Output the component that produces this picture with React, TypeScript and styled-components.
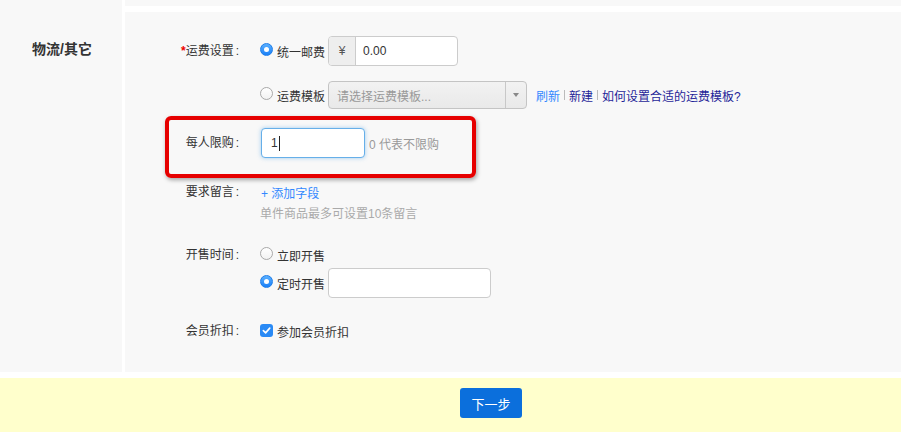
import React from "react";
import styled, { createGlobalStyle, css } from "styled-components";

const Global = createGlobalStyle`
  html, body { margin: 0; padding: 0; background: #fff; }
  body {
    font-family: "Liberation Sans", "Noto Sans CJK SC", sans-serif;
    font-size: 12px;
    color: #333;
  }
`;

const Section = styled.div<{ $h?: number }>`
  display: flex;
  gap: 3px;
  margin-bottom: 6px;
  ${(p) => p.$h !== undefined && css`height: ${p.$h}px;`}
`;

const SideCol = styled.div`
  width: 122px;
  flex: none;
  background: #f8f8f8;
  box-sizing: border-box;
  padding: 27px 0 0 32px;
  font-size: 14px;
  font-weight: bold;
  line-height: 20px;
  color: #333;
`;

const MainCol = styled.div<{ $bare?: boolean }>`
  flex: 1;
  background: #f8f8f8;
  position: relative;
  padding: ${(p) => (p.$bare ? "0" : "24px 0 31px")};
`;

const Row = styled.div<{ $mt?: number }>`
  display: flex;
  margin-top: ${(p) => p.$mt ?? 0}px;
`;

const Label = styled.div<{ $lh?: number }>`
  width: 115px;
  flex: none;
  text-align: right;
  line-height: ${(p) => p.$lh ?? 20}px;
  color: #333;
  white-space: nowrap;
`;

const Colon = styled.span`
  margin-left: 2px;
  margin-right: 1px;
`;

const Star = styled.span`
  color: #e00;
  font-weight: bold;
`;

const Controls = styled.div`
  margin-left: 20px;
  display: flex;
  flex-direction: column;
`;

const Line = styled.div<{ $h?: number; $mt?: number }>`
  display: flex;
  align-items: center;
  height: ${(p) => p.$h ?? 20}px;
  margin-top: ${(p) => p.$mt ?? 0}px;
  white-space: nowrap;
`;

const RadioDot = styled.span<{ $on?: boolean }>`
  width: 13px;
  height: 13px;
  border-radius: 50%;
  box-sizing: border-box;
  flex: none;
  margin-bottom: 3px;
  display: inline-flex;
  align-items: center;
  justify-content: center;
  ${(p) =>
    p.$on
      ? css`
          background: linear-gradient(#5bb0ff, #1a80f8);
          border: 1px solid #1f7ee8;
          &::after {
            content: "";
            width: 5px;
            height: 5px;
            border-radius: 50%;
            background: #fff;
          }
        `
      : css`
          background: linear-gradient(#fff, #f2f2f2);
          border: 1px solid #a9a9a9;
        `}
`;

const OptText = styled.span`
  margin-left: 4px;
  color: #333;
`;

const InputGroup = styled.div`
  margin-left: 3px;
  width: 130px;
  height: 30px;
  box-sizing: border-box;
  border: 1px solid #ccc;
  border-radius: 4px;
  background: #fff;
  display: flex;
  overflow: hidden;
`;

const Addon = styled.div`
  width: 26px;
  background: #eee;
  border-right: 1px solid #ccc;
  display: flex;
  align-items: center;
  justify-content: center;
  color: #555;
`;

const GroupValue = styled.div`
  padding-left: 7px;
  display: flex;
  align-items: center;
  color: #333;
`;

const Select = styled.div`
  margin-left: 3px;
  width: 199px;
  height: 28px;
  box-sizing: border-box;
  border: 1px solid #c4c4c4;
  border-radius: 4px;
  background: linear-gradient(#f2f2f2, #e9e9e9);
  display: flex;
`;

const SelectText = styled.div`
  flex: 1;
  padding-left: 8px;
  display: flex;
  align-items: center;
  color: #999;
`;

const SelectArrow = styled.div`
  width: 20px;
  border-left: 1px solid #c8c8c8;
  display: flex;
  align-items: center;
  justify-content: center;
  &::after {
    content: "";
    border-left: 3px solid transparent;
    border-right: 3px solid transparent;
    border-top: 4px solid #888;
  }
`;

const Links = styled.div`
  margin-left: 9px;
  display: flex;
  align-items: center;
`;

const Link = styled.a<{ $visited?: boolean }>`
  color: ${(p) => (p.$visited ? "#1f1f98" : "#3388ff")};
  text-decoration: none;
  cursor: pointer;
`;

const Sep = styled.span`
  width: 1px;
  height: 10px;
  background: #bbb;
  margin: 0 4px;
`;

const TextBox = styled.div<{ $w: number; $focus?: boolean; $ml?: number }>`
  width: ${(p) => p.$w}px;
  height: 30px;
  box-sizing: border-box;
  margin-left: ${(p) => p.$ml ?? 0}px;
  background: #fff;
  border-radius: 4px;
  display: flex;
  align-items: center;
  padding-left: 9px;
  color: #333;
  ${(p) =>
    p.$focus
      ? css`
          border: 1px solid #66afe9;
          box-shadow: 0 0 4px rgba(102, 175, 233, 0.6);
        `
      : css`
          border: 1px solid #ccc;
        `}
`;

const Caret = styled.span`
  display: inline-block;
  width: 1px;
  height: 15px;
  background: #222;
  margin-left: 1px;
`;

const Hint = styled.span`
  margin-left: 4px;
  color: #999;
`;

const HelpText = styled.div`
  margin-top: 2px;
  line-height: 20px;
  color: #aaa;
`;

const CheckBox = styled.span`
  width: 13px;
  height: 13px;
  border-radius: 3px;
  background: #2a8af5;
  display: inline-flex;
  align-items: center;
  justify-content: center;
  margin-bottom: 2px;
  flex: none;
`;

const Highlight = styled.div`
  position: absolute;
  left: 40px;
  top: 104px;
  width: 311px;
  height: 62px;
  box-sizing: border-box;
  border: 4px solid #e60000;
  border-radius: 6px;
  box-shadow: 1px 2px 4px rgba(0, 0, 0, 0.35);
  pointer-events: none;
`;

const Footer = styled.div`
  background: #ffffcc;
  height: 60px;
  box-sizing: border-box;
  padding: 10px 0 0 460px;
`;

const Button = styled.button`
  width: 62px;
  height: 30px;
  border: none;
  border-radius: 3px;
  background: #0b6fdc;
  color: #fff;
  font-family: "Liberation Sans", "Noto Sans CJK SC", sans-serif;
  font-size: 13px;
  padding: 0;
  cursor: pointer;
`;

const Radio = ({ on, children }: { on?: boolean; children: React.ReactNode }) => (
  <>
    <RadioDot $on={on} />
    <OptText>{children}</OptText>
  </>
);

export default function App() {
  return (
    <>
      <Global />
      <Section $h={6}>
        <SideCol />
        <MainCol $bare />
      </Section>
      <Section>
        <SideCol>物流/其它</SideCol>
        <MainCol>
          <Row>
            <Label $lh={30}>
              <Star>*</Star>运费设置<Colon>:</Colon>
            </Label>
            <Controls>
              <Line $h={30}>
                <Radio on>统一邮费</Radio>
                <InputGroup>
                  <Addon>¥</Addon>
                  <GroupValue>0.00</GroupValue>
                </InputGroup>
              </Line>
              <Line $h={28} $mt={15}>
                <Radio>运费模板</Radio>
                <Select>
                  <SelectText>请选择运费模板...</SelectText>
                  <SelectArrow />
                </Select>
                <Links>
                  <Link>刷新</Link>
                  <Sep />
                  <Link $visited>新建</Link>
                  <Sep />
                  <Link $visited>如何设置合适的运费模板?</Link>
                </Links>
              </Line>
            </Controls>
          </Row>

          <Row $mt={19}>
            <Label $lh={30}>
              每人限购<Colon>:</Colon>
            </Label>
            <Controls>
              <Line $h={30}>
                <TextBox $w={104} $focus $ml={1}>
                  1<Caret />
                </TextBox>
                <Hint>0 代表不限购</Hint>
              </Line>
            </Controls>
          </Row>

          <Row $mt={24}>
            <Label>
              要求留言<Colon>:</Colon>
            </Label>
            <Controls>
              <Line>
                <Link style={{ marginLeft: 1 }}>+ 添加字段</Link>
              </Line>
              <HelpText>单件商品最多可设置10条留言</HelpText>
            </Controls>
          </Row>

          <Row $mt={21}>
            <Label>
              开售时间<Colon>:</Colon>
            </Label>
            <Controls>
              <Line>
                <Radio>立即开售</Radio>
              </Line>
              <Line $h={30} $mt={3}>
                <Radio on>定时开售</Radio>
                <TextBox $w={163} $ml={3} />
              </Line>
            </Controls>
          </Row>

          <Row $mt={23}>
            <Label>
              会员折扣<Colon>:</Colon>
            </Label>
            <Controls>
              <Line>
                <CheckBox>
                  <svg width="9" height="9" viewBox="0 0 10 10">
                    <path
                      d="M1.5 5.2 L4 7.6 L8.6 2.4"
                      fill="none"
                      stroke="#fff"
                      strokeWidth="1.8"
                      strokeLinecap="round"
                      strokeLinejoin="round"
                    />
                  </svg>
                </CheckBox>
                <OptText>参加会员折扣</OptText>
              </Line>
            </Controls>
          </Row>

          <Highlight />
        </MainCol>
      </Section>
      <Footer>
        <Button>下一步</Button>
      </Footer>
    </>
  );
}
